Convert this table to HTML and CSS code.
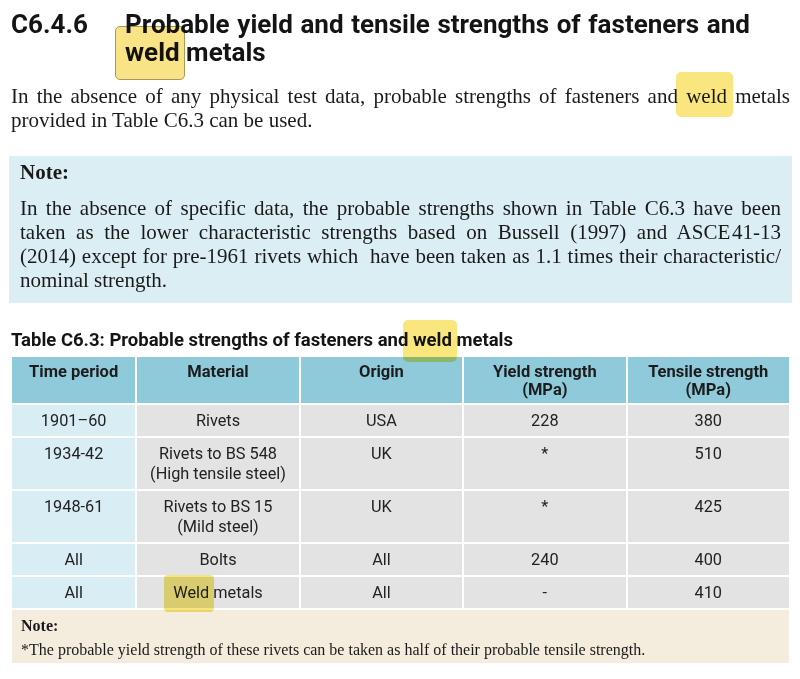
FILE: index.html
```html
<!DOCTYPE html>
<html>
<head>
<meta charset="utf-8">
<link rel="stylesheet" href="styles.css">
</head>
<body>
<div class="page">
  <h1 class="sec">
    <span class="sec-num">C6.4.6</span>
    <span class="sec-title">Probable yield and tensile strengths of fasteners and <span class="hl hl-boxed">weld</span> metals</span>
  </h1>
  <p class="body-text">In the absence of any physical test data, probable strengths of fasteners and <span class="hl hl-para">weld</span> metals provided in Table C6.3 can be used.</p>

  <div class="note">
    <div class="note-title">Note:</div>
    <p class="note-text">In the absence of specific data, the probable strengths shown in Table C6.3 have been taken as the lower characteristic strengths based on Bussell (1997) and ASCE&#8202;41-13 (2014) except for pre-1961 rivets which&nbsp; have been taken as 1.1 times their characteristic/ nominal strength.</p>
  </div>

  <div class="caption">Table C6.3: Probable strengths of fasteners and <span class="hl hl-cap">weld</span> metals</div>

  <table class="tbl">
    <colgroup>
      <col class="c1"><col class="c2"><col class="c3"><col class="c4"><col class="c5">
    </colgroup>
    <thead>
      <tr>
        <th>Time period</th>
        <th>Material</th>
        <th>Origin</th>
        <th>Yield strength<br>(MPa)</th>
        <th>Tensile strength<br>(MPa)</th>
      </tr>
    </thead>
    <tbody>
      <tr><td class="first">1901–60</td><td>Rivets</td><td>USA</td><td>228</td><td>380</td></tr>
      <tr><td class="first">1934-42</td><td>Rivets to BS 548<br>(High tensile steel)</td><td>UK</td><td>*</td><td>510</td></tr>
      <tr><td class="first">1948-61</td><td>Rivets to BS 15<br>(Mild steel)</td><td>UK</td><td>*</td><td>425</td></tr>
      <tr><td class="first">All</td><td>Bolts</td><td>All</td><td>240</td><td>400</td></tr>
      <tr><td class="first">All</td><td><span class="hl hl-cell">Weld</span> metals</td><td>All</td><td>-</td><td>410</td></tr>
      <tr class="foot">
        <td colspan="5">
          <div class="foot-title">Note:</div>
          <div class="foot-text">*The probable yield strength of these rivets can be taken as half of their probable tensile strength.</div>
        </td>
      </tr>
    </tbody>
  </table>
</div>
</body>
</html>
```

FILE: styles.css
```css
html, body {
  margin: 0;
  padding: 0;
  background: #ffffff;
}

.page {
  width: 800px;
  padding: 10px 0 0 0;
  color: #111;
}

.sec {
  display: flex;
  margin: 0 50px 0 11px;
  font-family: Roboto, "Liberation Sans", sans-serif;
  font-weight: 700;
  font-size: 26px;
  line-height: 28px;
  color: #141414;
}

.sec-num {
  flex: 0 0 114px;
}

.sec-title {
  flex: 1;
  text-align: justify;
}

.body-text {
  margin: 18px 10px 0 11px;
  font-family: "Liberation Serif", serif;
  font-size: 21px;
  line-height: 24px;
  text-align: justify;
  color: #1a1a1a;
}

.hl {
  position: relative;
}

.hl::before {
  content: "";
  position: absolute;
  mix-blend-mode: multiply;
  pointer-events: none;
}

.hl-boxed::before {
  left: -10px;
  right: -5px;
  top: -11px;
  bottom: -13px;
  background: #f8e487;
  border: 1px solid #a89a52;
  border-radius: 5px;
}

.hl-para::before {
  left: -10px;
  right: -6px;
  top: -12px;
  bottom: -9px;
  background: #f9e67e;
  border-radius: 5px;
}

.hl-cap::before {
  left: -10px;
  right: -5px;
  top: -9px;
  bottom: -11px;
  background: #f9e67e;
  border-radius: 5px;
}

.hl-cell::before {
  left: -9px;
  right: -5px;
  top: -8px;
  bottom: -10px;
  background: #f4e57c;
  border-radius: 4px;
}

.note {
  margin: 24px 8px 0 9px;
  padding: 4px 11px 11px 11px;
  background: #dbeef4;
  font-family: "Liberation Serif", serif;
  color: #1a1a1a;
}

.note-title {
  font-weight: 700;
  font-size: 21px;
  line-height: 24px;
}

.note-text {
  margin: 12px 0 0 0;
  font-size: 21px;
  line-height: 24px;
  text-align: justify;
}

.caption {
  margin: 26px 0 0 11px;
  font-family: Roboto, "Liberation Sans", sans-serif;
  font-weight: 700;
  font-size: 18.5px;
  line-height: 22px;
  color: #141414;
}

.tbl {
  margin: 4px 0 0 10px;
  width: 781px;
  border-collapse: separate;
  border-spacing: 2px;
  table-layout: fixed;
  font-family: Roboto, "Liberation Sans", sans-serif;
  font-size: 16.3px;
  color: #222;
}

.c1 { width: 123px; }
.c2 { width: 161px; }
.c3 { width: 161px; }
.c4 { width: 161px; }
.c5 { width: 161px; }

.tbl th {
  background: #8fcadb;
  font-weight: 700;
  font-size: 16.5px;
  line-height: 18px;
  padding: 6px 4px 4px;
  vertical-align: top;
  text-align: center;
  height: 36px;
  color: #1c1c1c;
}

.tbl td {
  background: #e3e3e3;
  line-height: 20px;
  padding: 6px 4px 5px;
  vertical-align: top;
  text-align: center;
}

.tbl td.first {
  background: #d9edf4;
}

.tbl tr.foot td {
  background: #f4ecdc;
  text-align: left;
  padding: 6px 9px 3px;
  font-family: "Liberation Serif", serif;
  color: #1a1a1a;
}

.foot-title {
  font-weight: 700;
  font-size: 16px;
  line-height: 20px;
}

.foot-text {
  margin-top: 4px;
  font-size: 16px;
  line-height: 20px;
}
```
